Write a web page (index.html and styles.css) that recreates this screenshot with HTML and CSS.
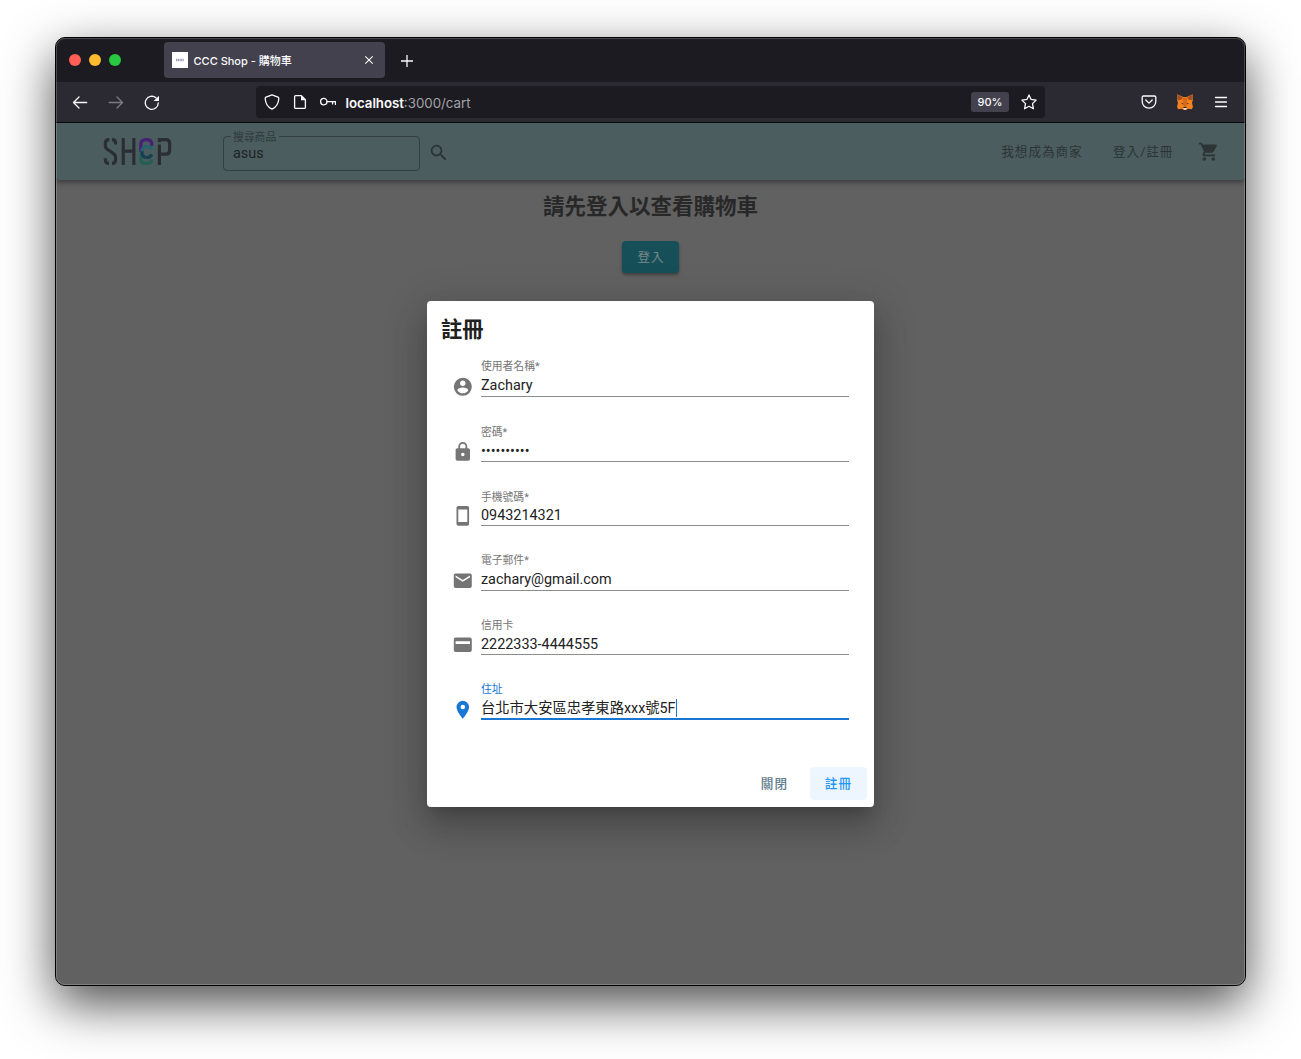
FILE: index.html
```
<!DOCTYPE html>
<html lang="zh-Hant">
<head>
<meta charset="utf-8">
<title>CCC Shop - 購物車</title>
<link rel="stylesheet" href="styles.css">
</head>
<body>
<div class="window">
  <div class="tabstrip">
    <div class="lights"><i class="red"></i><i class="amber"></i><i class="green"></i></div>
    <div class="tab">
      <svg class="favicon" viewBox="0 0 16 16"><path fill="#fff" d="M0 0h16v16H0z"/><path stroke="#a0a0a8" stroke-width="2.6" stroke-dasharray="1.3 .5" d="M4 8h4m2.400 0h1.800"/><path stroke="#8fa5d8" stroke-width="2.600" d="M8.300 8h1.600"/></svg>
      <span class="tab-title">CCC Shop - 購物車</span>
      <svg class="close" viewBox="0 0 10 10"><path d="M1.300 1.300l7.400 7.400M8.700 1.300L1.300 8.700"/></svg>
    </div>
    <svg class="newtab" viewBox="0 0 14 14"><path d="M7 1v12M1 7h12"/></svg>
  </div>
  <div class="toolbar">
    <div class="nav">
      <svg viewBox="0 0 16 16"><path d="M14.700 8.500H1.700M7 3L1.500 8.500 7 14"/></svg>
      <svg class="dim" viewBox="0 0 16 16"><path d="M1.300 8.500h13M9 3L14.500 8.500 9 14"/></svg>
      <svg viewBox="0 0 16 16"><path d="M14.300 9A6.500 6.500 0 1 1 12 3.800"/><path class="solid" d="M15 1.700v5.300H9.700z"/></svg>
    </div>
    <div class="urlbar">
      <svg viewBox="0 0 16 16"><path d="M8 .9l6 2.300c.7.300.8.700.8 1.300C14.600 9 12.500 13 8 15.200 3.500 13 1.400 9 1.200 4.500c0-.6.100-1 .8-1.300z"/></svg>
      <svg viewBox="0 0 16 16"><path d="M3.600 1.600h5.800l4 4v7.800q0 1-1 1H3.600q-1 0-1-1V2.600q0-1 1-1z"/><path class="solid" d="M9 1.500v4.700h4.600z"/></svg>
      <svg viewBox="0 0 16 16"><circle cx="3.800" cy="7.600" r="3.200"/><path d="M7 7.600h8.500v2.800M12.600 7.600v2.300"/></svg>
      <span class="url"><b>localhost</b>:3000/cart</span>
      <span class="zoom">90%</span>
      <svg class="star" viewBox="0 0 16 16"><path d="M8 .9l2.100 4.500 5 .7-3.600 3.500.9 5.100L8 12.300l-4.400 2.400.9-5.100L.9 6.100l5-.7z"/></svg>
    </div>
    <div class="tools">
      <svg viewBox="0 0 16 16"><path d="M2.500 2h11q1.300 0 1.300 1.300V7.500a6.800 6.600 0 0 1-13.600 0V3.300Q1.200 2 2.500 2zM4.800 6L8 9.100 11.200 6"/></svg>
      <svg class="fox" viewBox="0 0 48 48"><path fill="#f58220" d="M1 1l18 8h10L47 1l1 17-3 8 3 13-4 7-11-2-5 4h-8l-5-4-11 2-4-7 3-13-3-8z"/><path fill="#a3521f" d="M1 1l17 10-6 7-11 1zM47 1L30 11l6 7 11 1z"/><path fill="#d7651a" d="M19 11h10l2 10-4 15h-6l-4-15z"/><path fill="#2b2433" d="M12 27l6 1 1 4zM36 27l-6 1-1 4zM20 38h8l1 4h-10z"/><path fill="#ddd" d="M19 42h10l-2 5h-6z"/></svg>
      <svg viewBox="0 0 16 16"><path d="M2.500 3.500h11M2.500 8h11M2.500 12.500h11"/></svg>
    </div>
  </div>
  <div class="viewport">
    <header class="appbar">
      <svg class="logo" viewBox="24 36 208 86" fill="none" stroke-width="9.500">
        <g stroke="#2b2d35"><path d="M62 58V54Q62 43 51 43M43 43Q31 43 31 54V61Q31 69 38 73L54 84Q62 89 62 97V104Q62 115 51 115M42 115Q31 115 31 104V99"/><path d="M85 38V120M117 38V120M90 78H112"/><path d="M194 120V58M194 51V43H213Q225 43 225 55V75Q225 87 213 87H199"/></g>
        <path stroke="#235f52" d="M141 85Q138 90 138 102Q138 115 154 115Q171 115 171 103"/>
        <path stroke="#452075" d="M138 80V58Q138 43 154 43Q171 43 171 56V62"/>
        <path stroke="#24636f" d="M141 82Q141 64 156 64Q167 64 171 73"/>
        <path stroke="#183e51" d="M141 78Q141 97 156 97Q167 97 171 88"/>
      </svg>
      <fieldset class="search"><legend>搜尋商品</legend><span>asus</span></fieldset>
      <svg class="mdi" viewBox="0 0 24 24"><path d="M9.500 3A6.500 6.500 0 0 1 16 9.500c0 1.610-.59 3.090-1.560 4.230l.27.270h.79l5 5-1.500 1.500-5-5v-.79l-.27-.27A6.516 6.516 0 0 1 9.500 16a6.500 6.500 0 0 1 0-13m0 2C7 5 5 7 5 9.500S7 14 9.500 14 14 12 14 9.500 12 5 9.500 5z"/></svg>
      <nav class="links"><span>我想成為商家</span><span>登入/註冊</span>
        <svg class="mdi" viewBox="0 0 24 24"><path d="M17 18a2 2 0 1 1 0 4 2 2 0 0 1 0-4M1 2h3.270l.94 2H20a1 1 0 0 1 1 1c0 .17-.05.34-.12.500l-3.580 6.470c-.34.610-1 1.030-1.750 1.030H8.100l-.9 1.630-.3.120a.25.25 0 0 0 .25.250H19v2H7a2 2 0 0 1-2-2c0-.35.090-.68.240-.96l1.360-2.450L3 4H1V2m6 16a2 2 0 1 1 0 4 2 2 0 0 1 0-4z"/></svg>
      </nav>
    </header>
    <main class="page">
      <h2>請先登入以查看購物車</h2>
      <button class="login">登入</button>
    </main>
    <div class="overlay">
      <form class="dialog">
        <h3>註冊</h3>
        <div class="fields">
          <div class="field">
            <svg class="mdi" viewBox="0 0 24 24"><path d="M12,19.200C9.500,19.200 7.290,17.920 6,16C6.030,14 10,12.900 12,12.900C14,12.900 17.970,14 18,16C16.710,17.920 14.500,19.200 12,19.200M12,5A3,3 0 0,1 15,8A3,3 0 0,1 12,11A3,3 0 0,1 9,8A3,3 0 0,1 12,5M12,2A10,10 0 0,0 2,12A10,10 0 0,0 12,22A10,10 0 0,0 22,12C22,6.470 17.500,2 12,2Z"/></svg>
            <div class="control"><label>使用者名稱*</label><div class="value">Zachary</div></div>
          </div>
          <div class="field low">
            <svg class="mdi" viewBox="0 0 24 24"><path d="M12,17A2,2 0 0,0 14,15C14,13.890 13.100,13 12,13A2,2 0 0,0 10,15A2,2 0 0,0 12,17M18,8A2,2 0 0,1 20,10V20A2,2 0 0,1 18,22H6A2,2 0 0,1 4,20V10C4,8.890 4.900,8 6,8H7V6A5,5 0 0,1 12,1A5,5 0 0,1 17,6V8H18M12,3A3,3 0 0,0 9,6V8H15V6A3,3 0 0,0 12,3Z"/></svg>
            <div class="control"><label>密碼*</label><div class="value">••••••••••</div></div>
          </div>
          <div class="field low tight">
            <svg class="mdi" viewBox="0 0 24 24"><path d="M17,19H7V5H17M17,1H7C5.890,1 5,1.890 5,3V21A2,2 0 0,0 7,23H17A2,2 0 0,0 19,21V3C19,1.890 18.100,1 17,1Z"/></svg>
            <div class="control"><label>手機號碼*</label><div class="value">0943214321</div></div>
          </div>
          <div class="field">
            <svg class="mdi" viewBox="0 0 24 24"><path d="M20,8L12,13L4,8V6L12,11L20,6M20,4H4C2.890,4 2,4.890 2,6V18A2,2 0 0,0 4,20H20A2,2 0 0,0 22,18V6C22,4.890 21.100,4 20,4Z"/></svg>
            <div class="control"><label>電子郵件*</label><div class="value">zachary@gmail.com</div></div>
          </div>
          <div class="field low">
            <svg class="mdi" viewBox="0 0 24 24"><path fill-rule="evenodd" d="M4 4H20A2 2 0 0 1 22 6V18A2 2 0 0 1 20 20H4A2 2 0 0 1 2 18V6A2 2 0 0 1 4 4ZM4 8V11H20V8Z"/></svg>
            <div class="control"><label>信用卡</label><div class="value">2222333-4444555</div></div>
          </div>
          <div class="field focused">
            <svg class="mdi" viewBox="0 0 24 24"><path d="M12,11.500A2.500,2.500 0 0,1 9.500,9A2.500,2.500 0 0,1 12,6.500A2.500,2.500 0 0,1 14.500,9A2.500,2.500 0 0,1 12,11.500M12,2A7,7 0 0,0 5,9C5,14.250 12,22 12,22C12,22 19,14.250 19,9A7,7 0 0,0 12,2Z"/></svg>
            <div class="control"><label>住址</label><div class="value">台北市大安區忠孝東路xxx號5F<i class="caret"></i></div></div>
          </div>
        </div>
        <div class="actions"><button type="button" class="cancel">關閉</button><button type="button" class="submit">註冊</button></div>
      </form>
    </div>
  </div>
</div>
</body>
</html>
```

FILE: styles.css
```
* { box-sizing: border-box; }
html, body { height: 100%; }
body {
  margin: 0;
  padding: 37px 55px 73px;
  background: #fff;
  overflow: hidden;
  font-family: Roboto, "Noto Sans CJK TC", sans-serif;
}
svg { display: block; flex: none; }
button { border: 0; font: inherit; }

.window {
  position: relative;
  width: 1191px;
  height: 949px;
  display: flex;
  flex-direction: column;
  border: 1px solid #000;
  border-radius: 10px;
  overflow: hidden;
  background: #616161;
  box-shadow: 0 18px 50px rgba(0, 0, 0, .7);
}
.window::after {
  content: "";
  position: absolute;
  inset: 0;
  border-radius: 9px;
  box-shadow: inset 0 0 0 1px rgba(255, 255, 255, .2);
  pointer-events: none;
}

/* browser chrome */
.tabstrip, .toolbar {
  display: flex;
  align-items: center;
  font-family: Inter, "Noto Sans CJK TC", sans-serif;
  color: #fbfbfe;
}
.tabstrip { height: 44px; background: #1c1b22; padding-left: 13px; }
.lights { display: flex; gap: 8px; width: 95px; }
.lights i { width: 12px; height: 12px; border-radius: 50%; }
.red { background: #ff5f57; }
.amber { background: #febc2e; }
.green { background: #28c840; }
.tab {
  width: 221px;
  height: 36px;
  padding: 0 11px 0 8px;
  display: flex;
  align-items: center;
  border-radius: 4px;
  background: #42414d;
  font-size: 11px;
  font-weight: 500;
}
.favicon { width: 16px; height: 16px; }
.tab-title { flex: 1; padding: 0 0 1px 5.500px; white-space: nowrap; }
.close, .newtab, .toolbar svg { fill: none; stroke: #fbfbfe; }
.close { width: 10px; height: 10px; stroke-width: 1.1; }
.newtab { width: 14px; height: 14px; margin: 1px 0 0 14.500px; stroke-width: 1.3; }
.toolbar {
  height: 41px;
  background: #2b2a33;
  border-bottom: 1px solid #0c0c0d;
  padding: 0 16px;
}
.toolbar svg {
  width: 16px;
  height: 16px;
  stroke-width: 1.3;
  stroke-linecap: round;
  stroke-linejoin: round;
}
.toolbar .dim { stroke: #7c7b82; }
.toolbar .solid { fill: #fbfbfe; stroke: none; }
.nav { display: flex; gap: 20px; width: 184px; }
.urlbar {
  width: 789px;
  height: 32px;
  padding: 0 8px;
  display: flex;
  align-items: center;
  gap: 12px;
  border-radius: 4px;
  background: #1c1b22;
}
.url { flex: 1; margin-left: -2.500px; padding-top: 2px; font-size: 13.3px; color: #a3a2a8; }
.url b { font-weight: 600; color: #fbfbfe; letter-spacing: -.05px; }
.zoom {
  width: 38px;
  height: 20px;
  line-height: 20px;
  text-align: center;
  border-radius: 3px;
  background: #42414d;
  font-size: 11px;
  font-weight: 500;
}
.tools { margin-left: auto; display: flex; gap: 20px; }
.toolbar .fox { stroke: none; }

/* shop page */
.viewport { position: relative; flex: 1; background: #616161; }
.mdi { width: 21.6px; height: 21.6px; fill: currentColor; }
.appbar {
  height: 57px;
  padding: 1px 25px 0 47px;
  display: flex;
  align-items: center;
  background: #4b5d5f;
  border-radius: 0 0 4px 4px;
  box-shadow: 0 2px 4px rgba(0, 0, 0, .3), 0 4px 7px rgba(0, 0, 0, .12);
  color: #2c3435;
}
.logo { width: 69px; height: 29px; margin-top: -1px; }
.search {
  width: 197px;
  height: 40px;
  margin: 0 7.500px 2px 51px;
  padding: 0 9px;
  border: 1px solid #343f40;
  border-radius: 4px;
  font-size: 14.4px;
  line-height: 16px;
  color: #1e2324;
}
.search legend {
  height: 11px;
  margin-left: -2px;
  padding: 2px 3px 0 2px;
  font-size: 10.8px;
  line-height: 10px;
  color: #303a3b;
}
.search span { display: block; margin-top: 3.500px; }
.search + .mdi { margin-top: 2px; }
.links {
  margin-left: auto;
  display: flex;
  align-items: center;
  font-size: 12.6px;
  line-height: 18px;
  letter-spacing: .95px;
}
.links span { margin: 0 30.500px 0 0; }
.links span + span { margin-right: 25px; }
.page { display: flex; flex-direction: column; align-items: center; padding-top: 11px; }
.page h2 {
  margin: 0 0 18px;
  font-size: 21.5px;
  font-weight: 700;
  line-height: 32px;
  color: #282828;
}
.login {
  width: 57px;
  height: 32px;
  padding: 0 0 1px 1px;
  border-radius: 4px;
  background: #174f59;
  color: #77888b;
  font-size: 12.5px;
  letter-spacing: 1px;
  box-shadow: 0 2px 3px rgba(0, 0, 0, .35);
}

/* sign-up dialog */
.overlay {
  position: absolute;
  inset: 0;
  display: flex;
  justify-content: center;
  align-items: center;
}
.dialog {
  width: 447px;
  height: 506px;
  padding: 12px 7px 7px 14px;
  display: flex;
  flex-direction: column;
  border-radius: 4px;
  background: #fff;
  box-shadow: 0 10px 14px -6px rgba(0, 0, 0, .2), 0 22px 34px 3px rgba(0, 0, 0, .14), 0 8px 42px 7px rgba(0, 0, 0, .12);
}
.dialog h3 {
  margin: 0;
  font-size: 21.3px;
  font-weight: 700;
  line-height: 34px;
  color: #212121;
}
.fields { padding: 10px 18px 0 11px; }
.field { display: flex; gap: 7px; height: 64.5px; color: #757575; }
.field .mdi { margin: 19px .4px 0 -.4px; }
.control {
  flex: 1;
  height: 40px;
  padding-top: 1px;
  display: flex;
  flex-direction: column;
}
.low .control { padding-top: 2px; }
.control label {
  display: block;
  padding-left: .4px;
  font-size: 10.8px;
  line-height: 18px;
  color: #757575;
}
.value {
  flex: 1;
  min-height: 0;
  padding-left: .4px;
  border-bottom: 1px solid #8c8c8c;
  font-size: 14.4px;
  line-height: 20px;
  color: #212121;
}
.tight label { line-height: 20px; }
.tight .value { line-height: 16px; }
.focused, .focused label { color: #1976d2; }
.focused .value {
  border-bottom: 2px solid #1976d2;
  font-size: 14.3px;
  line-height: 18px;
}
.caret {
  display: inline-block;
  width: 1px;
  height: 18px;
  margin-left: .5px;
  vertical-align: -4px;
  background: #1976d2;
}
.actions { margin-top: auto; display: flex; justify-content: flex-end; gap: 7px; }
.actions button {
  width: 57px;
  height: 33px;
  padding: 0 0 2px;
  border-radius: 4px;
  background: none;
  font-size: 12.6px;
  font-weight: 500;
  letter-spacing: 1.13px;
}
.cancel { color: #607d8b; }
.actions .submit { background: #edf6fe; color: #2196f3; }
```
